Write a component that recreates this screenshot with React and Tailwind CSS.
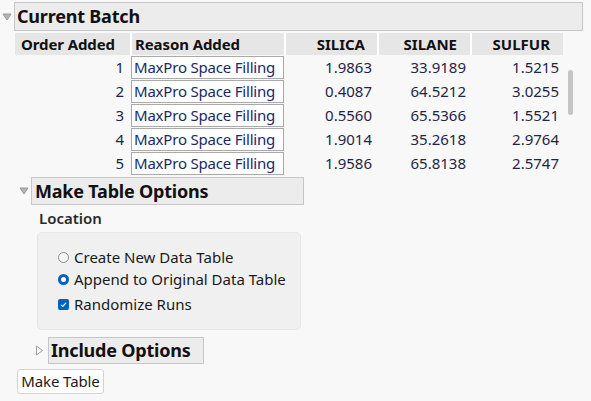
import React from 'react'

const rows = [
  [1, '1.9863', '33.9189', '1.5215'],
  [2, '0.4087', '64.5212', '3.0255'],
  [3, '0.5560', '65.5366', '1.5521'],
  [4, '1.9014', '35.2618', '2.9764'],
  [5, '1.9586', '65.8138', '2.5747'],
]

function DownTri() {
  return (
    <svg width="10" height="8" viewBox="0 0 10 8" className="shrink-0">
      <path d="M1 1 L9 1 L5 7 Z" fill="#b4b4b4" stroke="#9a9a9a" strokeWidth="1" strokeLinejoin="round" />
    </svg>
  )
}

function RightTri() {
  return (
    <svg width="9" height="11" viewBox="0 0 9 11" className="shrink-0">
      <path d="M1.5 1 L7.5 5.5 L1.5 10 Z" fill="none" stroke="#a0a0a0" strokeWidth="1" strokeLinejoin="round" />
    </svg>
  )
}

export default function App() {
  return (
    <div className="relative w-[591px] h-[401px] overflow-hidden bg-[#f8f8f8] text-[#111] font-['Noto_Sans','Open_Sans',sans-serif]">
      {/* Current Batch */}
      <div className="flex items-center pt-[2px] pl-[2px]">
        <DownTri />
        <div className="ml-[2px] w-[569px] h-[29px] flex items-center pl-[2px] bg-[#ececec] border border-[#c6c6c6] text-[18px] font-bold tracking-[-0.2px]">
          Current Batch
        </div>
      </div>

      <div className="ml-[15px] mt-[2px]">
        <div className="flex gap-[2px] h-[22px] w-[548px] bg-white text-[15px] font-bold">
          <div className="w-[115px] bg-[#e6e6e6] flex items-center pl-[6px] tracking-[-0.1px]">Order Added</div>
          <div className="w-[152px] bg-[#e6e6e6] flex items-center pl-[3px] tracking-[-0.1px]">Reason Added</div>
          <div className="w-[91px] bg-[#e6e6e6] flex items-center justify-end pr-[12px]">SILICA</div>
          <div className="w-[91px] bg-[#e6e6e6] flex items-center justify-end pr-[13px]">SILANE</div>
          <div className="w-[91px] bg-[#e6e6e6] flex items-center justify-end pr-[13px]">SULFUR</div>
        </div>

        {rows.map(([n, a, b, c]) => (
          <div key={n} className="flex gap-[2px] h-[24px] items-center text-[15px] text-[#1f2547]">
            <div className="w-[115px] text-right pr-[6px]">{n}</div>
            <div className="w-[153px] h-[23px] -ml-[1px] bg-white border border-[#a9a9a9] flex items-center pl-[2px] text-[#182a66] whitespace-nowrap tracking-[-0.2px]">
              MaxPro Space Filling
            </div>
            <div className="w-[91px] text-right pr-[5px]">{a}</div>
            <div className="w-[91px] text-right pr-[4px]">{b}</div>
            <div className="w-[91px] text-right pr-[4px]">{c}</div>
          </div>
        ))}
      </div>

      {/* scrollbar thumb */}
      <div className="absolute left-[568px] top-[70px] w-[5px] h-[45px] rounded-full bg-[#c4c4c4]" />

      {/* Make Table Options */}
      <div className="flex items-center mt-[2px] pl-[19px]">
        <DownTri />
        <div className="ml-[2px] w-[273px] h-[28px] flex items-center pl-[3px] bg-[#ececec] border border-[#c6c6c6] text-[18px] font-bold tracking-[-0.2px]">
          Make Table Options
        </div>
      </div>

      <div className="pl-[39px] mt-[2px] text-[15px] font-semibold text-[#2a2a2a] leading-[22px]">Location</div>

      <div className="ml-[37px] mt-[3px] w-[264px] h-[98px] rounded-[5px] bg-[#f0f0f0] border border-[#e6e6e6] pl-[20px] pt-[13px] text-[15px] text-[#1a1a1a]">
        <div className="flex items-center h-[22px] gap-[5px]">
          <span className="w-[11px] h-[11px] rounded-full border border-[#8c8c8c] bg-[#f6f6f6]" />
          <span>Create New Data Table</span>
        </div>
        <div className="flex items-center h-[23px] gap-[5px]">
          <span className="w-[11px] h-[11px] rounded-full border-[3px] border-[#0061c2] bg-white" />
          <span>Append to Original Data Table</span>
        </div>
        <div className="flex items-center h-[27px] gap-[5px]">
          <span className="w-[11px] h-[11px] rounded-[2px] bg-[#0061c2] flex items-center justify-center">
            <svg width="9" height="9" viewBox="0 0 9 9">
              <path d="M2 4.8 L3.8 6.4 L7 2.8" fill="none" stroke="#fff" strokeWidth="1.1" />
            </svg>
          </span>
          <span>Randomize Runs</span>
        </div>
      </div>

      {/* Include Options */}
      <div className="flex items-center mt-[7px] pl-[35px]">
        <RightTri />
        <div className="ml-[4px] w-[156px] h-[27px] flex items-center pl-[2px] bg-[#ececec] border border-[#c6c6c6] text-[18px] font-bold tracking-[-0.2px]">
          Include Options
        </div>
      </div>

      <button className="ml-[17px] mt-[5px] w-[87px] h-[25px] bg-white border border-[#d4d4d4] rounded-[3px] text-[15px] text-[#1a1a1a] flex items-center justify-center tracking-[-0.1px]">
        Make Table
      </button>
    </div>
  )
}
